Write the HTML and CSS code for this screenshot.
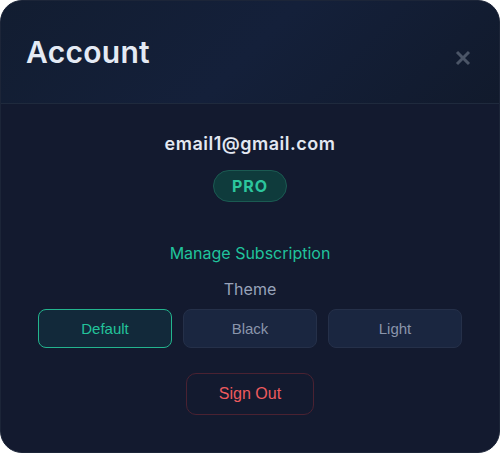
FILE: index.html
```html
<!DOCTYPE html>
<html>
<head>
<meta charset="utf-8">
<link rel="stylesheet" href="styles.css">
</head>
<body>
<div class="modal">
  <div class="header">
    <h1 class="title">Account</h1>
    <button class="close" aria-label="Close">
      <svg width="16" height="16" viewBox="0 0 16 16"><path d="M2 2 L14 14 M14 2 L2 14" stroke="#4b5567" stroke-width="3" stroke-linecap="butt"/></svg>
    </button>
  </div>
  <div class="content">
    <div class="email">email1@gmail.com</div>
    <div class="badge">PRO</div>
    <a class="manage">Manage Subscription</a>
    <div class="theme-label">Theme</div>
    <div class="themes">
      <button class="theme active">Default</button>
      <button class="theme">Black</button>
      <button class="theme">Light</button>
    </div>
    <button class="signout">Sign Out</button>
  </div>
</div>
</body>
</html>
```

FILE: styles.css
```css
html, body {
  margin: 0;
  padding: 0;
  background: #ffffff;
}
.modal {
  width: 500px;
  height: 453px;
  box-sizing: border-box;
  border: 1px solid #1c2538;
  border-radius: 22px;
  background: #131a2f;
  overflow: hidden;
  font-family: Inter, "Liberation Sans", sans-serif;
}
.header {
  height: 103px;
  box-sizing: border-box;
  border-bottom: 1px solid #1f2a3d;
  background: linear-gradient(135deg, #121d31 0%, #14203a 50%, #111a2c 100%);
  display: flex;
  align-items: center;
  justify-content: space-between;
  padding: 0 28px 0 25px;
}
.title {
  margin: 0;
  font-size: 30px;
  font-weight: 600;
  color: #e4eaf4;
  letter-spacing: 0.3px;
}
.close {
  background: none;
  border: none;
  padding: 0;
  width: 16px;
  height: 16px;
  display: block;
  position: relative;
  top: 6px;
}
.close svg { display: block; }
.content {
  display: flex;
  flex-direction: column;
  align-items: center;
  padding-top: 29px;
}
.email {
  font-size: 18px;
  font-weight: 600;
  color: #e3e8f2;
  line-height: 22px;
  letter-spacing: 0.5px;
}
.badge {
  margin-top: 15px;
  width: 74px;
  height: 32px;
  box-sizing: border-box;
  border-radius: 16px;
  border: 1px solid #1b5a52;
  background: #0f3b3c;
  color: #2cc59d;
  font-size: 16px;
  font-weight: 700;
  letter-spacing: 1px;
  display: flex;
  align-items: center;
  justify-content: center;
}
.manage {
  margin-top: 41px;
  font-size: 16px;
  color: #20c39c;
  line-height: 20px;
}
.theme-label {
  margin-top: 16px;
  font-size: 16px;
  color: #98a3ba;
  line-height: 20px;
}
.themes {
  margin-top: 10px;
  display: flex;
  gap: 11px;
}
.theme {
  width: 134px;
  height: 39px;
  box-sizing: border-box;
  border-radius: 8px;
  border: 1px solid #253049;
  background: #1a2640;
  color: #8a95ab;
  font-family: "Liberation Sans", Arial, sans-serif;
  font-size: 15px;
  padding: 0;
}
.theme.active {
  border-color: #23b48e;
  background: #12293a;
  color: #23c39a;
}
.signout {
  margin-top: 25px;
  width: 128px;
  height: 42px;
  box-sizing: border-box;
  border-radius: 10px;
  border: 1px solid #4a2232;
  background: transparent;
  color: #ee5a5e;
  font-family: "Liberation Sans", Arial, sans-serif;
  font-size: 16px;
  padding: 0;
}
```
